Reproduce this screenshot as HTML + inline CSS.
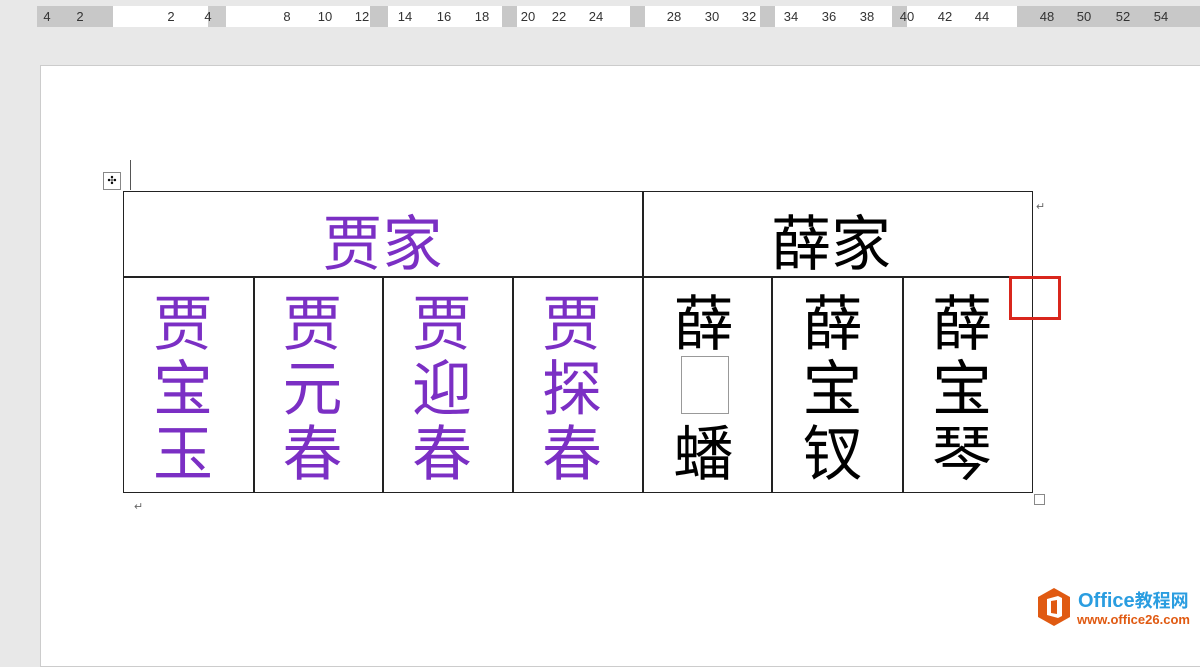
<!DOCTYPE html>
<html><head><meta charset="utf-8"><style>
body{margin:0;width:1200px;height:636px;background:#e8e8e8;position:relative;overflow:hidden;font-family:"Liberation Sans","Noto Sans CJK SC",sans-serif}
.ruler{position:absolute;top:6px;left:37px;width:1163px;height:21px;background:#fff}
.rg{position:absolute;top:0;height:21px;background:#c8c8c8}
.rn{position:absolute;top:3px;font-size:13px;color:#333;transform:translateX(-50%)}
.page{position:absolute;left:40px;top:65px;width:1170px;height:600px;background:#fff;border:1px solid #ccc}
.t{position:absolute;border:1.5px solid #222;box-sizing:border-box}
.c{position:absolute;text-align:center;font-family:"Noto Sans CJK SC",sans-serif;line-height:65px}
.p{color:#7b2fc4}
.mk{position:absolute;font-size:11px;color:#666}
</style></head><body>
<div class="ruler">
<div class="rg" style="left:0;width:76px"></div>
<div class="rg" style="left:171px;width:18px;background:#ccc"></div>
<div class="rg" style="left:333px;width:18px"></div>
<div class="rg" style="left:465px;width:15px"></div>
<div class="rg" style="left:593px;width:15px"></div>
<div class="rg" style="left:723px;width:15px"></div>
<div class="rg" style="left:855px;width:15px"></div>
<div class="rg" style="left:980px;width:183px"></div>
<span class="rn" style="left:10px">4</span><span class="rn" style="left:43px">2</span>
<span class="rn" style="left:134px">2</span><span class="rn" style="left:171px">4</span>
<span class="rn" style="left:250px">8</span><span class="rn" style="left:288px">10</span><span class="rn" style="left:325px">12</span>
<span class="rn" style="left:368px">14</span><span class="rn" style="left:407px">16</span><span class="rn" style="left:445px">18</span>
<span class="rn" style="left:491px">20</span><span class="rn" style="left:522px">22</span><span class="rn" style="left:559px">24</span>
<span class="rn" style="left:637px">28</span><span class="rn" style="left:675px">30</span><span class="rn" style="left:712px">32</span>
<span class="rn" style="left:754px">34</span><span class="rn" style="left:792px">36</span><span class="rn" style="left:830px">38</span>
<span class="rn" style="left:870px">40</span><span class="rn" style="left:908px">42</span><span class="rn" style="left:945px">44</span>
<span class="rn" style="left:1010px">48</span><span class="rn" style="left:1047px">50</span><span class="rn" style="left:1086px">52</span><span class="rn" style="left:1124px">54</span>
</div>
<div class="page"></div>
<div style="position:absolute;left:103px;top:172px;width:16px;height:16px;border:1px solid #888;font-size:11px;text-align:center;line-height:16px;background:#fff">✣</div>
<div style="position:absolute;left:130px;top:160px;width:1px;height:30px;background:#555"></div>
<div class="t" style="left:123px;top:191px;width:910px;height:302px"></div>
<div style="position:absolute;left:123px;top:276px;width:910px;height:1.5px;background:#222"></div>
<div style="position:absolute;left:642px;top:191px;width:1.5px;height:302px;background:#222"></div>
<div style="position:absolute;left:253px;top:276px;width:1.5px;height:217px;background:#222"></div>
<div style="position:absolute;left:382px;top:276px;width:1.5px;height:217px;background:#222"></div>
<div style="position:absolute;left:512px;top:276px;width:1.5px;height:217px;background:#222"></div>
<div style="position:absolute;left:771px;top:276px;width:1.5px;height:217px;background:#222"></div>
<div style="position:absolute;left:902px;top:276px;width:1.5px;height:217px;background:#222"></div>
<div class="c p" style="left:123px;top:207px;width:519px;font-size:60px">贾家</div>
<div class="c" style="left:642px;top:207px;width:378px;font-size:60px">薛家</div>
<div class="c p" style="left:123px;top:287px;width:120px;font-size:60px">贾<br>宝<br>玉</div>
<div class="c p" style="left:253px;top:287px;width:119px;font-size:60px">贾<br>元<br>春</div>
<div class="c p" style="left:382px;top:287px;width:120px;font-size:60px">贾<br>迎<br>春</div>
<div class="c p" style="left:512px;top:287px;width:120px;font-size:60px">贾<br>探<br>春</div>
<div class="c" style="left:642px;top:287px;width:123px;font-size:60px">薛<br><br>蟠</div>
<div style="position:absolute;left:681px;top:356px;width:46px;height:56px;border:1px solid #999"></div>
<div class="c" style="left:771px;top:287px;width:123px;font-size:60px">薛<br>宝<br>钗</div>
<div class="c" style="left:902px;top:287px;width:120px;font-size:60px">薛<br>宝<br>琴</div>
<div class="mk" style="left:1036px;top:200px">↵</div>
<div class="mk" style="left:134px;top:500px">↵</div>
<div style="position:absolute;left:1009px;top:276px;width:52px;height:44px;border:3px solid #d9261c;box-sizing:border-box"></div>
<div style="position:absolute;left:1034px;top:494px;width:9px;height:9px;border:1px solid #888;background:#fff"></div>
<svg style="position:absolute;left:1036px;top:587px" width="36" height="40" viewBox="0 0 36 40"><polygon points="18,1 34,10 34,30 18,39 2,30 2,10" fill="#e05a12"/><path d="M11 12 L22 9 L26 11 L26 29 L22 31 L11 28 Z M15 14 V26 L21 27 V13 Z" fill="#fff" fill-rule="evenodd"/></svg>
<div style="position:absolute;left:1078px;top:589px;font-size:20px;font-weight:bold;color:#2a9de0;line-height:22px;white-space:nowrap">Office<span style="font-family:'Noto Sans CJK SC';font-size:18px">教程网</span></div>
<div style="position:absolute;left:1077px;top:612px;font-size:13px;font-weight:bold;color:#e05a12;white-space:nowrap">www.office26.com</div>
</body></html>
